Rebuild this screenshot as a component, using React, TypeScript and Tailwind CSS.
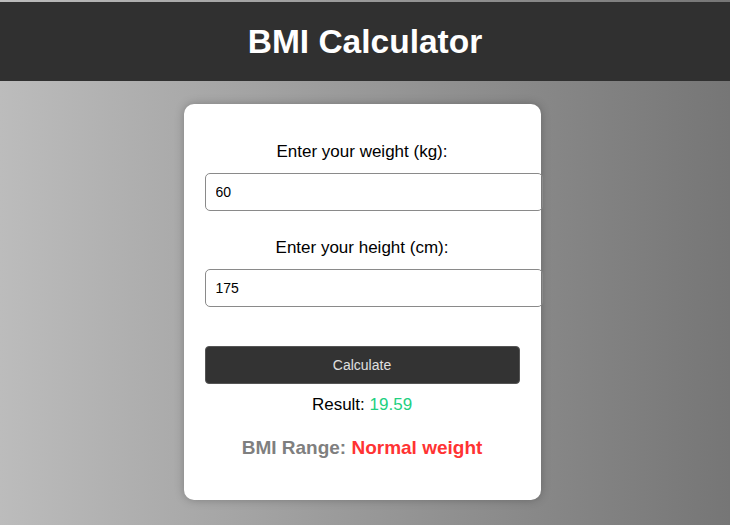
export default function App() {
  return (
    <div
      className="min-h-[525px] bg-gradient-to-r from-[#bcbcbc] to-[#767676] pt-[2px]"
      style={{ fontFamily: '"Liberation Sans", Arial, sans-serif' }}
    >
      {/* Header */}
      <div className="h-[79px] bg-[#303030] flex items-center justify-center">
        <h1 className="text-[33.5px] font-bold text-white leading-none">BMI Calculator</h1>
      </div>

      {/* Card */}
      <div className="pr-[6px]">
        <div className="mx-auto mt-[23px] w-[357px] bg-white rounded-[10px] shadow-[0_0_10px_rgba(0,0,0,0.25)] px-[21px] pt-[39px] pb-[42px] text-center">
          <label className="block text-[17px] leading-[18px] text-black">Enter your weight (kg):</label>
          <input
            type="number"
            defaultValue="60"
            className="box-content block mt-[12px] w-[316px] h-[16px] px-[10px] py-[10px] border border-[#8a8a8a] rounded-[5px] text-[14px] text-black outline-none"
          />

          <label className="block mt-[28px] text-[17px] leading-[18px] text-black">Enter your height (cm):</label>
          <input
            type="number"
            defaultValue="175"
            className="box-content block mt-[12px] w-[316px] h-[16px] px-[10px] py-[10px] border border-[#8a8a8a] rounded-[5px] text-[14px] text-black outline-none"
          />

          <button className="block mt-[39px] w-[315px] h-[38px] bg-[#333333] text-[#e0e0e0] text-[14px] rounded-[4px] border border-[#555]">
            Calculate
          </button>

          <p className="mt-[12px] text-[17px] leading-[18px] text-black">
            Result: <span className="text-[#22d07f]">19.59</span>
          </p>

          <p className="mt-[23px] text-[19px] leading-[21px] font-bold text-[#7f7f7f]">
            BMI Range: <span className="text-[#ff3333]">Normal weight</span>
          </p>
        </div>
      </div>
    </div>
  )
}
